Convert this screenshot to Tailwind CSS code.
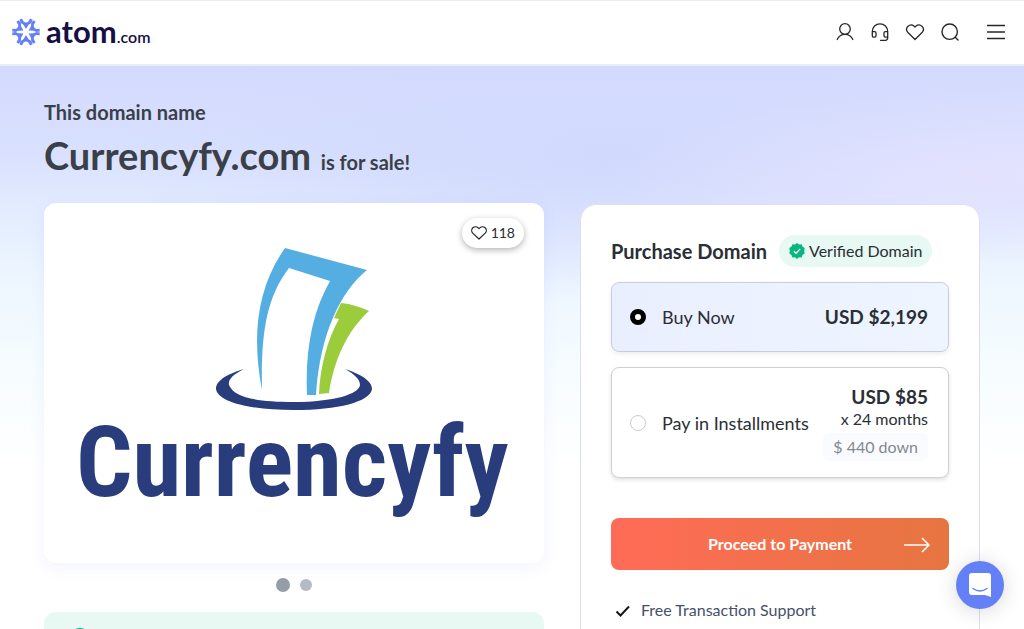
<!DOCTYPE html>
<html lang="en">
<head>
  <meta charset="UTF-8" />
  <meta name="viewport" content="width=device-width, initial-scale=1" />
  <title>Currencyfy.com is for sale!</title>
  <script src="https://cdn.jsdelivr.net/npm/@tailwindcss/browser@4"></script>
</head>
<body class="font-[Lato,sans-serif] text-[#2a2e35] bg-white">
  <header class="flex items-center justify-between h-[66px] pl-3 pr-[18px] pb-[2px] bg-white border-t border-b-2 border-t-[#e9ebee] border-b-[#e9edf5]">
    <a href="#" class="flex items-center gap-[6px] text-[#150f45]" aria-label="atom.com">
      <svg class="size-7" viewBox="0 0 28 28" fill="#6580f5">
        <path id="ray" d="M7.400 1.800 10 .600 11.600 3.600Q14 5.400 16.400 3.600L18 .600 20.600 1.800 19.300 5 16.600 6.800 14 11 11.400 6.800 8.700 5Z" />
        <use href="#ray" transform="rotate(60 14 14)" />
        <use href="#ray" transform="rotate(120 14 14)" />
        <use href="#ray" transform="rotate(180 14 14)" />
        <use href="#ray" transform="rotate(240 14 14)" />
        <use href="#ray" transform="rotate(300 14 14)" />
      </svg>
      <span class="text-[31px] leading-8 font-bold">atom<span class="text-base font-semibold">.com</span></span>
    </a>
    <nav class="flex items-center gap-[15px]">
      <a href="#" aria-label="Account">
        <svg class="size-5" viewBox="0 0 20 20" fill="none" stroke="#24272c" stroke-width="1.300" stroke-linecap="round"><circle cx="10" cy="7" r="5.300" /><path d="M2.200 17.500C3.500 14.300 6.400 12.300 10 12.300s6.500 2 7.800 5.200" /></svg>
      </a>
      <a href="#" aria-label="Support">
        <svg class="size-5" viewBox="0 0 20 20" fill="none" stroke="#24272c" stroke-width="1.300" stroke-linecap="round" stroke-linejoin="round"><path d="M2.300 10.500V9.500a7.700 7.700 0 0 1 15.400 0v6.300a2.500 2.500 0 0 1-2.500 2.500H10.500M2.300 9.700h2.400a1.300 1.300 0 0 1 1.300 1.300v2.800a1.300 1.300 0 0 1-1.300 1.300H3.600a1.300 1.300 0 0 1-1.300-1.300ZM17.700 9.700h-2.400A1.300 1.300 0 0 0 14 11v2.800a1.300 1.300 0 0 0 1.300 1.300h2.400" /></svg>
      </a>
      <a href="#" aria-label="Favorites">
        <svg class="size-5" viewBox="0 0 20 20" fill="none" stroke="#24272c" stroke-width="1.300" stroke-linejoin="round"><path d="M10 17.500 2.700 10.200A4.400 4.400 0 0 1 9 4.100l1 1 1-1a4.400 4.400 0 0 1 6.300 6.100Z" /></svg>
      </a>
      <a href="#" aria-label="Search">
        <svg class="size-5" viewBox="0 0 20 20" fill="none" stroke="#24272c" stroke-width="1.400" stroke-linecap="round"><circle cx="9.700" cy="9.700" r="7.700" /><path d="m15.200 15.200 2.800 2.800" /></svg>
      </a>
      <button type="button" class="ml-[11px]" aria-label="Menu">
        <svg class="size-5" viewBox="0 0 20 20" fill="none" stroke="#24272c" stroke-width="1.500"><path d="M1 3.500h18M1 10h18M1 16.500h18" /></svg>
      </button>
    </nav>
  </header>

  <main class="pt-8 px-11 bg-[radial-gradient(420px_90px_at_100%_110px,#e3e2ff,transparent),radial-gradient(500px_150px_at_60%_90px,#d1d9fd,transparent),linear-gradient(to_bottom,#d4dafe,#d9e1ff_90px,#e4edff_150px,#eef7ff_220px,#f6fcff_300px,#ffffff_400px)]">
    <h1 class="text-[#3a3f48] font-bold text-xl">
      <span class="block leading-7">This domain name</span>
      <span class="block mt-1 leading-[50px]"><span class="text-[38px]">Currencyfy.com</span>&nbsp; is for sale!</span>
    </h1>

    <div class="mt-4 grid grid-cols-[5fr_4fr] gap-9 items-start">
      <section>
        <div class="relative bg-white rounded-xl shadow-[0_4px_16px_#5b6cf014]">
          <svg class="w-full" viewBox="0 0 500 360">
            <path fill="#54aee1" d="M241 45 323 67C297 88 276 130 272 192L263 192C261 145 269 108 286 78L245 65C221 96 217 135 218 187C208 135 212 86 241 45Z" />
            <path fill="#9bcc3b" d="M297 100C307 101 317 104 325 108C303 128 290 157 285 190L275 191C276 165 283 137 295 116L290 115Z" />
            <path fill="#293c7b" d="M200 166C177 173 172 180 172 186C174 199 206 207 250 207S326 199 328 186C328 180 322 173 301 166C312 172 316 177 316 182C315 191 290 199 250 199S190 194 185 182C184 177 188 172 200 166Z" />
            <text x="32" y="293" fill="#293c7b" font-family="Roboto Condensed, Roboto, sans-serif" font-weight="700" font-size="99">Currencyfy</text>
          </svg>
          <button type="button" class="absolute top-[15px] right-5 flex items-center gap-1 h-[30px] px-[9px] rounded-full bg-white shadow-[0_2px_6px_#0000004d] text-sm">
            <svg class="size-4" viewBox="0 0 20 20" fill="none" stroke="#24272c" stroke-width="1.500" stroke-linejoin="round"><path d="M10 17.500 2.200 10.200A4.600 4.600 0 0 1 9 3.600l1 1 1-1a4.600 4.600 0 0 1 6.800 6.600Z" /></svg>
            118
          </button>
        </div>
        <div class="flex items-center justify-center gap-[10px] h-[14px] mt-[15px]">
          <button type="button" class="size-[14px] rounded-full bg-[#959da8]" aria-label="Slide 1"></button>
          <button type="button" class="size-3 rounded-full bg-[#b5bbc2]" aria-label="Slide 2"></button>
        </div>
        <div class="mt-5 px-6 pt-4 h-20 rounded-xl bg-[#e8f8f2]">
          <svg class="size-6" viewBox="0 0 24 24"><circle cx="12" cy="12" r="12" fill="#0bb783" /></svg>
        </div>
      </section>

      <form class="mt-px px-[30px] pt-[30px] pb-10 bg-white rounded-t-2xl border border-[#dcdff0]">
        <div class="flex items-center gap-3">
          <h2 class="text-xl font-bold">Purchase Domain</h2>
          <span class="flex items-center gap-1 h-8 px-[10px] rounded-full bg-[#e8f8f2] text-base">
            <svg class="size-4" viewBox="0 0 16 16"><path fill="#0bb57f" d="m8 0 2.100 1.400 2.500-.200.900 2.400 2.200 1.300L15.200 8l.500 2.600-2.200 1.400-.900 2.400-2.500-.200L8 16l-2.100-1.800-2.500.200-.900-2.400L.300 10.600.800 8 .300 4.900l2.200-1.300.900-2.400 2.500.200Z" /><path d="m4.800 8.200 2.200 2.200 4.200-4.500" fill="none" stroke="#fff" stroke-width="1.200" /></svg>
            Verified Domain
          </span>
        </div>
        <label class="mt-[15px] flex items-center h-[70px] pl-[18px] pr-5 rounded-lg border border-[#c5cde0] bg-linear-to-r from-[#e9effe] to-[#eff5ff] shadow-[0_2px_4px_#00000014]">
          <input type="radio" name="plan" checked class="appearance-none size-4 rounded-full border border-[#ccc] bg-white checked:border-5 checked:border-black" />
          <span class="ml-4 text-lg">Buy Now</span>
          <span class="ml-auto text-[19px] font-bold">USD $2,199</span>
        </label>
        <label class="mt-[15px] flex items-center h-[111px] pl-[18px] pr-5 rounded-lg border border-[#cdd0d6] bg-white shadow-[0_2px_4px_#0000001f]">
          <input type="radio" name="plan" class="appearance-none size-4 rounded-full border border-[#ccc] bg-white checked:border-5 checked:border-black" />
          <span class="ml-4 text-lg">Pay in Installments</span>
          <span class="ml-auto flex flex-col items-end">
            <span class="text-[19px] leading-6 font-bold">USD $85</span>
            <span class="text-base leading-5">x 24 months</span>
            <span class="mt-1 px-[10px] py-1 rounded-md bg-[#fafbff] text-base leading-5 text-[#85888e]">$ 440 down</span>
          </span>
        </label>
        <button type="submit" class="relative mt-10 w-full h-[52px] rounded-lg bg-linear-to-r from-[#ff6b57] to-[#e67540] text-white text-base font-bold">
          Proceed to Payment
          <svg class="absolute right-[18px] top-[18px] w-[28px] h-[18px]" viewBox="0 0 28 18" fill="none" stroke="#fff" stroke-width="1.500"><path d="M1 9h25M19 2l7 7-7 7" /></svg>
        </button>
        <p class="mt-7 flex items-center gap-[10px] text-base text-[#46506a]">
          <svg class="size-5" viewBox="0 0 20 20" fill="none" stroke="#16181d" stroke-width="2"><path d="m5.500 11.500 4 4 8.500-9" /></svg>
          Free Transaction Support
        </p>
      </form>
    </div>
  </main>

  <button type="button" class="fixed right-5 bottom-5 size-12 rounded-full bg-[#6480f6] shadow-[0_2px_20px_#00000029] flex items-center justify-center" aria-label="Open chat">
    <svg class="w-[22px] h-6" viewBox="0 0 22 24"><path fill="#fff" d="M3 0h16a3 3 0 0 1 3 3v21l-6-2H3a3 3 0 0 1-3-3V3a3 3 0 0 1 3-3Z" /><path d="M4 15.500q7 5 14 0" fill="none" stroke="#6480f6" stroke-width="1.400" stroke-linecap="round" /></svg>
  </button>
</body>
</html>
